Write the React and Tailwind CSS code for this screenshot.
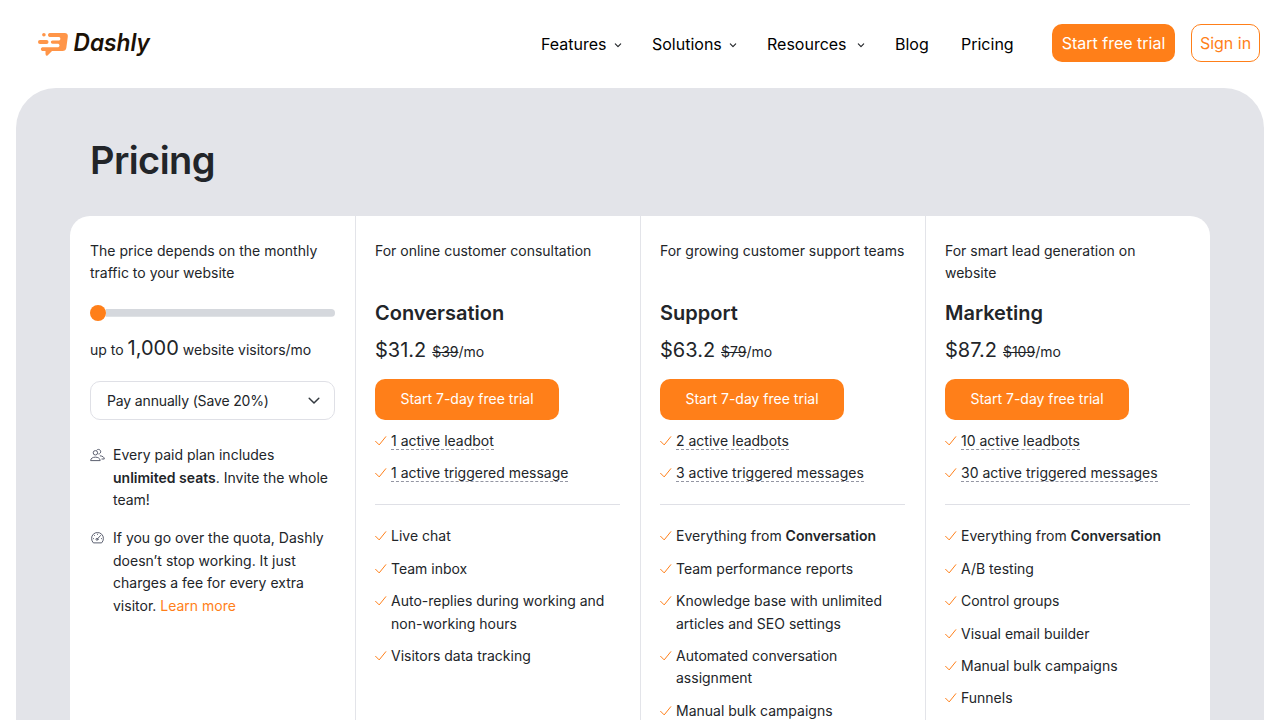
import React from "react";

const plans = [
  {
    name: "Conversation",
    intro: "For online customer consultation",
    price: "$31.2",
    old: "$39",
    limits: ["1 active leadbot", "1 active triggered message"],
    features: ["Live chat", "Team inbox", "Auto-replies during working and non-working hours", "Visitors data tracking"],
  },
  {
    name: "Support",
    intro: "For growing customer support teams",
    price: "$63.2",
    old: "$79",
    limits: ["2 active leadbots", "3 active triggered messages"],
    base: "Conversation",
    features: ["Team performance reports", "Knowledge base with unlimited articles and SEO settings", "Automated conversation assignment", "Manual bulk campaigns"],
  },
  {
    name: "Marketing",
    intro: "For smart lead generation on website",
    price: "$87.2",
    old: "$109",
    limits: ["10 active leadbots", "30 active triggered messages"],
    base: "Conversation",
    features: ["A/B testing", "Control groups", "Visual email builder", "Manual bulk campaigns", "Funnels"],
  },
];

function Chevron({ className }) {
  return (
    <svg className={className} viewBox="0 0 8 5" fill="none" stroke="#222529" strokeWidth="1.1" strokeLinecap="round" strokeLinejoin="round">
      <path d="M1.3 .8 4 3.7 6.7 .8" />
    </svg>
  );
}

function Item({ children }) {
  return (
    <li className="flex">
      <svg className="mr-1 mt-[5px] h-3 w-3 shrink-0" viewBox="0 0 12 12" fill="none" stroke="#ff7f19" strokeLinecap="round" strokeLinejoin="round">
        <path d="M.6 6.3 4.2 9.9 10.8 1.7" />
      </svg>
      <span>{children}</span>
    </li>
  );
}

function Logo() {
  return (
    <svg className="h-[30px] w-[116px] overflow-visible" viewBox="0 0 116 30">
      <g fill="#ff9548">
        <circle cx="5.9" cy="6.8" r="1.8" />
        <path d="M11.5 5H26.5Q30.3 5 29.8 8.8L28.3 20Q27.8 23 24.5 23H14L9.8 27.2Q7.8 28.8 7.5 26V23H4.2A2 2 0 0 1 4.2 19.2H20.3A1.8 1.8 0 0 0 20.3 15.8H14.5A1.7 1.7 0 0 1 14.5 12.4H21A1.8 1.8 0 0 0 21 8.9H11.5A2 2 0 0 1 11.5 5Z" />
        <rect x="0" y="12" width="10.5" height="4" rx="2" />
      </g>
      <text x="35.5" y="23" textLength="76.5" lengthAdjust="spacingAndGlyphs" className="fill-[#1b1106] font-['Inter',sans-serif] text-2xl font-semibold italic">Dashly</text>
    </svg>
  );
}

export default function App() {
  return (
    <div className="h-[720px] w-full overflow-hidden bg-white font-['Inter',sans-serif] text-sm leading-[22.4px] text-[#222529]">
      <header className="flex h-[88px] items-start pl-[38px] pr-5 text-base leading-6 text-black">
        <div className="mt-7 grow"><Logo /></div>
        <nav className="mt-8 flex">
          <a className="flex w-[111px] items-center">Features<Chevron className="ml-[7px] mt-0.5 h-[5px] w-2" /></a>
          <a className="flex w-[115px] items-center">Solutions<Chevron className="ml-[7px] mt-0.5 h-[5px] w-2" /></a>
          <a className="flex w-32 items-center">Resources<Chevron className="ml-2.5 mt-0.5 h-[5px] w-2" /></a>
          <a className="w-[66px]">Blog</a>
          <a className="w-[91px]">Pricing</a>
        </nav>
        <button className="mt-6 h-[38px] w-[123px] rounded-[10px] bg-[#ff7f19] text-white">Start free trial</button>
        <button className="ml-4 mt-6 h-[38px] w-[69px] rounded-[10px] border border-[#ff7f19] text-[#ff7f19]">Sign in</button>
      </header>

      <main className="mx-4 h-[632px] rounded-t-[40px] bg-[#e3e4e9] px-[54px]">
        <h1 className="flex h-32 items-center pl-5 pt-4 text-[38px] font-semibold leading-[46px] tracking-[-0.6px]">Pricing</h1>
        <div className="grid h-[504px] grid-cols-4 overflow-hidden rounded-t-[20px] bg-white">
          <section className="px-5 pt-6">
            <p>The price depends on the monthly traffic to your website</p>
            <div className="mt-5 flex h-4 items-center">
              <span className="h-4 w-4 rounded-full bg-[#ff7f19]" />
              <span className="-ml-2 h-2 grow rounded-full bg-[#d5d8dd] [clip-path:inset(0_0_0_8px)]" />
            </div>
            <p className="mt-3 leading-[30px]">up to <span className="text-xl leading-[30px]">1,000</span> website visitors/mo</p>
            <div className="mt-4 flex h-[39px] items-center justify-between rounded-[10px] border border-[#dfe0e6] pl-4 pr-3.5 pt-0.5">
              <span className="tracking-[-0.15px]">Pay annually (Save 20%)</span>
              <svg className="h-3 w-3" viewBox="0 0 12 12" fill="none" stroke="#343a40" strokeWidth="1.5" strokeLinecap="round" strokeLinejoin="round"><path d="M1.2 3.2 6 8 10.8 3.2" /></svg>
            </div>
            <div className="mt-[24.4px] flex">
              <svg className="mr-2 mt-1 h-[15px] w-[15px] shrink-0" viewBox="0 0 15 15" fill="none" stroke="#5c6070" strokeLinejoin="round">
                <circle cx="5.4" cy="4.8" r="2.2" />
                <path d="M.6 12.6C.6 8 10.2 8 10.2 12.6ZM6.6 2.3A2.3 2.3 0 1 1 8.4 6M9.9 7.8Q14.2 8.2 14.3 11H11.5" />
              </svg>
              <p>Every paid plan includes <b className="font-semibold">unlimited seats</b>. Invite the whole team!</p>
            </div>
            <div className="mt-4 flex">
              <svg className="mr-2 mt-[3px] h-[15px] w-[15px] shrink-0" viewBox="0 0 15 15" fill="none" stroke="#5c6070" strokeLinecap="round" strokeLinejoin="round">
                <path d="M3.1 12.6A6 6 0 1 1 11.9 12.6Z" />
                <circle cx="7" cy="9.3" r="1" />
                <path d="M7.8 8.5 10.6 5.5M7.5 4.1V4.4M4.4 5.4 4.6 5.6M3.3 8.6H3.5M11.5 8.6H11.7" />
              </svg>
              <p>If you go over the quota, Dashly doesn’t stop working. It just charges a fee for every extra visitor. <a className="text-[#ff7f19]">Learn more</a></p>
            </div>
          </section>
          {plans.map((p) => (
            <section key={p.name} className="border-l border-[#e3e4e9] pl-[19px] pr-5 pt-6">
              <p className="h-[61px]">{p.intro}</p>
              <h2 className="text-xl font-semibold leading-6">{p.name}</h2>
              <p className="mt-2.5 leading-[30px]"><span className="mr-0.5 text-xl leading-[30px]">{p.price}</span> <s>{p.old}</s>/mo</p>
              <button className="mt-3 block h-[41px] w-[184px] rounded-[10px] bg-[#ff7f19] pb-px text-white">Start 7-day free trial</button>
              <ul className="mt-2.5 flex flex-col gap-2.5 border-b border-[#dfe0e6] pb-[19px]">
                {p.limits.map((t) => <Item key={t}><span className="border-b border-dashed border-[#9496a3]">{t}</span></Item>)}
              </ul>
              <ul className="mt-[20.6px] flex flex-col gap-2.5">
                {p.base && <Item>Everything from <b className="font-semibold">{p.base}</b></Item>}
                {p.features.map((t) => <Item key={t}>{t}</Item>)}
              </ul>
            </section>
          ))}
        </div>
      </main>
    </div>
  );
}
